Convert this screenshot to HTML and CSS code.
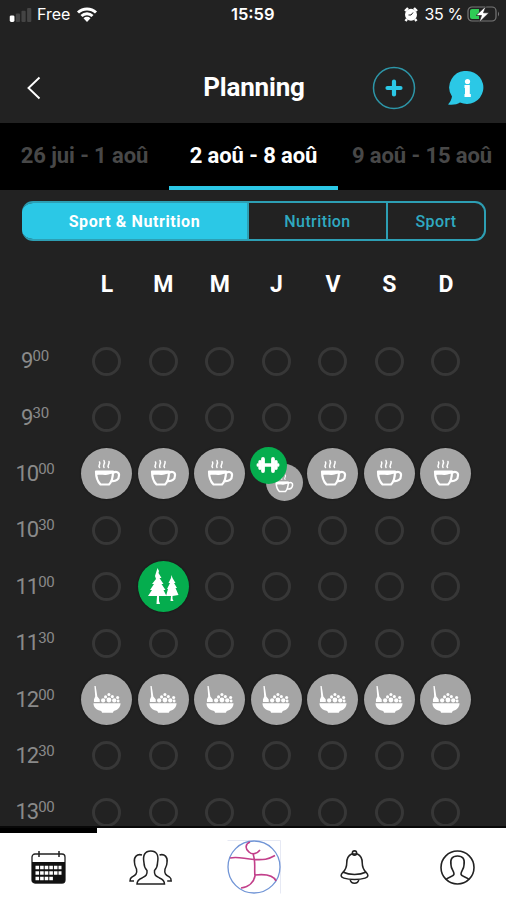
FILE: index.html
```
<!DOCTYPE html>
<html lang="fr">

<head>
    <meta charset="UTF-8">
    <meta name="viewport" content="width=device-width, initial-scale=1.0">
    <title>Planning</title>
    <link rel="stylesheet" href="styles.css">
</head>

<body>
    <svg class="sprite">
        <symbol id="cup" viewBox="0 0 28 30">
            <g fill="none" stroke="#fff" stroke-linecap="round" stroke-linejoin="round">
                <path stroke-width="1.500" d="M6.500 8.500c-2-2 1.500-3 0-5.500M11 8.500c-2-2.500 2-3.500 0-7M15.500 8.500c-2-2 1.500-3 .5-6" />
                <path stroke-width="2.200" d="M3 12.500h17c0 6-1 10-4 13H7.500c-3-3-4.500-7-4.500-13zM20 14c3-2 6.500-1 6 2.500 0 4-3 6-7.500 5.500" />
            </g>
            <path fill="#fff" d="M3 12h17v3c-3-1-5 1.500-8 1-3-.5-6-.5-8.500 0z" />
        </symbol>
        <symbol id="bowl" viewBox="0 0 30 30">
            <path fill="#fff" d="M1 18.800h28c0 4-3 7-7 8l-1 2H10l-1-2c-5-1-8-4-8-8zM2 1h1.300L5 12l2.500 3v2.500H1.500V15l1.300-3z" />
            <g fill="#fff">
                <circle cx="11" cy="16" r="2.200" />
                <circle cx="13.500" cy="12.300" r="1.600" />
                <circle cx="17" cy="9.800" r="1.600" />
                <circle cx="17" cy="15.500" r="2.500" />
                <circle cx="20.500" cy="12" r="1.600" />
                <circle cx="22.500" cy="16" r="2.200" />
                <circle cx="26" cy="13" r="1.600" />
                <circle cx="26.500" cy="16.500" r="1.500" />
            </g>
        </symbol>
        <symbol id="trees" viewBox="0 0 32 36">
            <path fill="#fff" d="M10.500 0l1.500 3-.5 2 3 5-2 0 4 6-2 0 4 6-2 0 3 6h-7.500v5l1 3h-3.500l.5-8H1l4-6H3l4-6H5l4-5-1-3z" />
            <path fill="#fff" d="M24.500 7l1 3 3 5h-1.500l3 5h-1.500l3 7-6 1v3l1 2h-3l.5-5h-5l2-7h-1l3-6h-1.500l2.500-5z" />
        </symbol>
        <symbol id="dumbbell" viewBox="0 0 24 18">
            <g stroke="#fff" stroke-linecap="round">
                <path stroke-width="3.400" d="M7 9h10" />
                <path stroke-width="3.800" d="M7 3v12M17 3v12" />
                <path stroke-width="3.400" d="M4 5.800v6.400M20 5.800v6.400" />
                <path stroke-width="2.400" d="M1.800 8.500v1M22.200 8.500v1" />
            </g>
        </symbol>
    </svg>

    <div class="app">
        <div class="status">
            <div class="status-left">
                <svg class="signal" viewBox="0 0 24 16">
                    <rect x="0" y="9" width="5" height="7" rx="1.500" fill="#fff" />
                    <rect x="6.500" y="7" width="4.500" height="9" rx="1" fill="#444" />
                    <rect x="12.500" y="4" width="4.500" height="12" rx="1" fill="#444" />
                    <rect x="18.500" y="1" width="4.500" height="15" rx="1" fill="#444" />
                </svg>
                <span class="carrier">Free</span>
                <svg class="wifi" viewBox="0 0 22 16">
                    <path d="M2 6.500a13 13 0 0 1 18 0M5.500 10a8 8 0 0 1 11 0" fill="none" stroke="#fff" stroke-width="3" />
                    <path d="M7.500 12.200a5 5 0 0 1 7 0L11 16z" fill="#fff" />
                </svg>
            </div>
            <span class="clock">15:59</span>
            <div class="status-right">
                <svg class="alarm" viewBox="0 0 14 15">
                    <path d="M1 4l3-3M13 4l-3-3M3 12l-1.500 2M11 12l1.500 2" stroke="#fff" stroke-width="2.400" />
                    <circle cx="7" cy="7.700" r="6" fill="#fff" />
                    <path d="M9 5.500L7 8H4.500" fill="none" stroke="#222" />
                </svg>
                <span class="percent">35 %</span>
                <svg class="battery" viewBox="0 0 33 18">
                    <rect x="1" y="2" width="28" height="14" rx="4" fill="none" stroke="#777" stroke-width="1.200" />
                    <path d="M31 6.500q2 2.500 0 5z" fill="#777" />
                    <path d="M5 4h7v10H5q-2 0-2-2V6q0-2 2-2z" fill="#2fca55" />
                    <path d="M19 1L9 10.500h5.500L12 17.500l10-9.700h-5.500z" fill="#fff" stroke="#222" stroke-width=".7" />
                </svg>
            </div>
        </div>

        <header class="header">
            <svg class="back" viewBox="0 0 14 24">
                <path d="M12.500 1.500L1.500 12l11 10.500" fill="none" stroke="#fff" stroke-width="1.900" />
            </svg>
            <h1>Planning</h1>
            <svg class="add" viewBox="0 0 44 44">
                <circle cx="22" cy="22" r="20.500" fill="none" stroke="#2d96a8" stroke-width="1.500" />
                <path d="M22 15.500v13M15.500 22h13" stroke="#2bc8e6" stroke-width="4.200" stroke-linecap="round" />
            </svg>
            <svg class="info" viewBox="0 0 36 34">
                <path d="M19 0a16.500 16.500 0 1 1-7 31.500C9 33.500 5 34 0 33.500c2-2 3.500-5 4-8A16.500 16.500 0 0 1 19 0z" fill="#2bc8e6" />
                <circle cx="19.500" cy="10.500" r="2.600" fill="#fff" />
                <path d="M16.500 14h5.300v9h1v3h-6.300v-3h.5v-6h-.5z" fill="#fff" />
            </svg>
        </header>

        <nav class="weeks">
            <span class="week">26 jui - 1 aoû</span>
            <span class="week active">2 aoû - 8 aoû</span>
            <span class="week">9 aoû - 15 aoû</span>
        </nav>

        <div class="filter">
            <span class="filter-item selected">Sport &amp; Nutrition</span>
            <span class="filter-item">Nutrition</span>
            <span class="filter-item">Sport</span>
        </div>

        <div class="row days">
            <span></span>
            <span>L</span><span>M</span><span>M</span><span>J</span><span>V</span><span>S</span><span>D</span>
        </div>

        <div class="planning" id="planning"></div>

        <nav class="tabbar">
            <div class="tab current">
                <svg width="35" height="34" viewBox="0 0 35 34">
                    <rect x="1" y="4" width="33" height="29" rx="3" fill="#fff" stroke="#222" stroke-width="1.300" />
                    <path d="M1 12h33v18q0 3-3 3H4q-3 0-3-3z" fill="#111" />
                    <path d="M8 1v6M28 1v6" stroke="#222" stroke-width="1.500" />
                    <path d="M4.500 17.500h26M4.500 23h26M4.500 28.500h18" stroke="#fff" stroke-width="3.600" stroke-dasharray="3.600 1" />
                </svg>
            </div>
            <div class="tab">
                <svg width="43" height="35" viewBox="0 0 43 35" fill="none" stroke="#222" stroke-width="1.500">
                    <path d="M18 20.500c-2-2-3-5-3-7.500C13.500 5 16 1 21.800 1s8.200 4 6.700 12c0 2.500-1 5.500-3 7.500-.5 5 1.500 5.500 5 7.500 3.500 1.500 5 3 5 6H8c0-3 1.500-4.500 5-6 3.500-2 5.500-2.500 5-7.500z" />
                    <path d="M13 5C8 3.500 4.500 7 5.500 12.500c0 3 1 4.500 2 6.500 1 5-1 6-4.500 8-2 1-2 2.500-2 4h4M30.500 5c5-1.500 8.500 2 7.500 7.500 0 3-1 4.500-2 6.500-1 5 1 6 4.500 8 1.500 1 1.700 2.500 1.700 4h-4" />
                </svg>
            </div>
            <div class="tab">
                <svg width="54" height="54" viewBox="0 0 54 54" fill="none">
                    <path d="M.5 .5h53v53" stroke="#dfe3f1" stroke-width=".8" />
                    <circle cx="27" cy="27" r="26" stroke="#7195d6" stroke-width="1.300" />
                    <path d="M23 2c-5 2-5 7-1 10 3 3 8 2 11-2M3 18c8-2 14 1 24 1.500s14 0 21-4M26 14c3 7 1 15 2 22-1 5-5 11-14 12M28 35c9-1 18-1 21 6" stroke="#c23f8a" stroke-width="1.600" />
                </svg>
            </div>
            <div class="tab">
                <svg width="29" height="34" viewBox="0 0 30 35" fill="none" stroke="#222" stroke-width="1.600">
                    <path d="M12 4c-4 2-5 5-5 9 0 5-2 8-4 10-3 3-2 5 1 6 6 2 16 2 22 0 3-1 4-3 1-6-2-2-4-5-4-10 0-4-1-7-5-9zM3.500 23c6 3 17 3 23 0M10.500 30.500c1 5 8 5 9 0" />
                    <circle cx="15" cy="3" r="2.200" />
                </svg>
            </div>
            <div class="tab">
                <svg width="35" height="35" viewBox="0 0 35 35" fill="none" stroke="#222" stroke-width="1.600">
                    <circle cx="17.500" cy="17.500" r="16.500" />
                    <path d="M6 29.500c2-2.500 8-3 8-5.500 0-3-3-5-3-9-1-6 1-9 6.500-9s7.500 3 6.500 9c0 4-3 6-3 9 0 2.500 6 3 8 5.500" />
                </svg>
            </div>
        </nav>
    </div>

    <script>
        var hours = ['9:00', '9:30', '10:00', '10:30', '11:00', '11:30', '12:00', '12:30', '13:00']

        function icon(name) {
            return '<svg class="icon-' + name + '"><use href="#' + name + '"/></svg>'
        }

        function event(name, color) {
            return '<div class="event ' + color + '">' + icon(name) + '</div>'
        }

        //What is planned at this hour and day
        function getSlot(hour, day) {
            if (hour === '10:00' && day === 3) {
                return '<div class="pair">' + event('cup', 'grey small') + event('dumbbell', 'green small') + '</div>'
            }
            if (hour === '10:00') {
                return event('cup', 'grey')
            }
            if (hour === '12:00') {
                return event('bowl', 'grey')
            }
            if (hour === '11:00' && day === 1) {
                return event('trees', 'green')
            }
            return '<div class="empty"></div>'
        }

        //Render the rows
        var rows = hours.map(function (hour) {
            var parts = hour.split(':')
            var row = '<div class="row"><span class="hour">' + parts[0] + '<span class="minutes">' + parts[1] + '</span></span>'
            for (var day = 0; day < 7; day++) {
                row += getSlot(hour, day)
            }
            return row + '</div>'
        })
        document.getElementById('planning').innerHTML = rows.join('')
    </script>
</body>

</html>
```
FILE: styles.css
```
* {
    margin: 0;
    padding: 0;
    box-sizing: border-box;
}

body {
    font-family: Roboto, sans-serif;
    background: #222;
    color: #fff;
    overflow: hidden;
}

svg {
    display: block;
    flex-shrink: 0;
}

.sprite {
    display: none;
}

.app {
    width: 506px;
    height: 900px;
    display: flex;
    flex-direction: column;
    overflow: hidden;
}

.status {
    height: 52px;
    padding: 2px 6px 26px 9px;
    display: grid;
    grid-template-columns: 222px auto 1fr;
    align-items: center;
    flex-shrink: 0;
    font-family: Inter, sans-serif;
    font-size: 16px;
}

.status-left,
.status-right {
    display: flex;
    align-items: center;
}

.status-right {
    justify-content: flex-end;
}

.signal {
    width: 24px;
    height: 15px;
}

.carrier {
    margin: 0 6px 0 4px;
}

.wifi {
    width: 22px;
    height: 16px;
}

.clock {
    font-weight: 600;
    font-size: 16.5px;
}

.alarm {
    width: 14px;
    height: 15px;
}

.percent {
    margin: 0 4px 0 6px;
    letter-spacing: -0.3px;
}

.battery {
    width: 33px;
    height: 18px;
}

.header {
    height: 71px;
    padding: 1px 22px 0 27px;
    display: flex;
    align-items: center;
    flex-shrink: 0;
}

.back {
    width: 14px;
    height: 24px;
}

h1 {
    width: 110px;
    margin: 0 63px 0 158px;
    text-align: center;
    font-size: 26px;
    line-height: 30px;
    letter-spacing: -0.2px;
    padding-bottom: 2px;
}

.add {
    width: 44px;
    height: 44px;
}

.info {
    width: 36px;
    height: 34px;
    margin-left: 32px;
}

.weeks {
    height: 67px;
    display: grid;
    grid-template-columns: 169px 169px 168px;
    background: #000;
    flex-shrink: 0;
}

.week {
    height: 67px;
    line-height: 66px;
    text-align: center;
    white-space: nowrap;
    font-size: 22px;
    font-weight: 700;
    letter-spacing: -0.1px;
    color: #484848;
}

.week.active {
    color: #fff;
    border-bottom: 4px solid #2bc8e6;
}

.filter {
    width: 464px;
    height: 40px;
    margin: 11px 0 0 22px;
    display: grid;
    grid-template-columns: 225px 139px 1fr;
    border: 2px solid #2d9fb4;
    border-left: none;
    border-radius: 11px;
    overflow: hidden;
    flex-shrink: 0;
}

.filter-item {
    text-align: center;
    line-height: 38px;
    font-size: 16px;
    font-weight: 500;
    color: #2fa9c0;
    letter-spacing: 0.4px;
}

.filter-item + .filter-item {
    border-left: 2px solid #2d9fb4;
}

.filter-item.selected {
    background: #2bc8e6;
    color: #fff;
    font-weight: 700;
    letter-spacing: 0.6px;
}

.row {
    height: 56.4px;
    display: grid;
    grid-template-columns: 78.7px repeat(7, 56.5px);
    align-items: center;
    justify-items: center;
    flex-shrink: 0;
}

.days {
    height: 86px;
    font-size: 23px;
    font-weight: 700;
}

.planning {
    flex: 1;
    padding-top: 6px;
    border-bottom: 2px solid #080808;
    overflow: hidden;
}

.hour {
    width: 70px;
    padding-bottom: 1px;
    justify-self: start;
    display: flex;
    justify-content: center;
    align-items: flex-start;
    font-size: 22px;
    line-height: 25px;
    letter-spacing: -1px;
    color: #8a8a8a;
}

.minutes {
    font-size: 15px;
    line-height: 17px;
    letter-spacing: -0.2px;
}

.empty {
    width: 29px;
    height: 29px;
    border: 3px solid #373737;
    border-radius: 50%;
}

.event {
    width: 51px;
    height: 51px;
    border-radius: 50%;
    display: flex;
    align-items: center;
    justify-content: center;
    box-shadow: 0 0 2px #111;
}

.grey {
    background: #a5a5a5;
}

.green {
    background: #05ad4e;
}

.pair {
    position: relative;
    width: 53px;
    height: 54px;
}

.small {
    position: absolute;
    width: 37px;
    height: 37px;
    right: 0;
    bottom: 0;
    box-shadow: none;
}

.small.green {
    left: 0;
    top: 0;
}

.icon-cup {
    width: 28px;
    height: 30px;
}

.small .icon-cup {
    width: 20px;
    height: 22px;
    margin-top: 3px;
}

.icon-bowl {
    width: 30px;
    height: 29px;
}

.icon-trees {
    width: 32px;
    height: 36px;
    margin-bottom: 1px;
}

.icon-dumbbell {
    width: 24px;
    height: 18px;
}

.tabbar {
    height: 72px;
    display: grid;
    grid-template-columns: 97px 107px 99px 103px 100px;
    background: #fff;
    flex-shrink: 0;
}

.tab {
    display: flex;
    align-items: center;
    justify-content: center;
    padding-top: 6px;
}

.tab:last-child {
    padding-left: 3px;
}

.tab.current {
    border-top: 5px solid #000;
    padding-top: 1px;
}
```
